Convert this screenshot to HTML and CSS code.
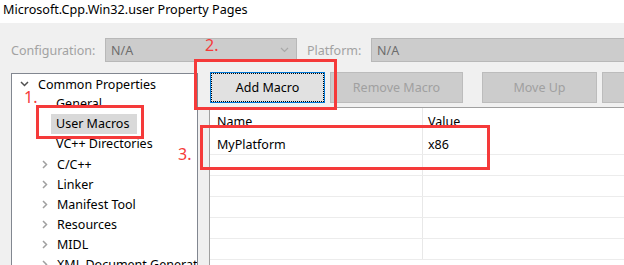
FILE: index.html
```html
<!DOCTYPE html>
<html lang="en">
  <head>
    <meta charset="UTF-8" />
    <title>Microsoft.Cpp.Win32.user Property Pages</title>
    <link rel="stylesheet" href="styles.css">
  </head>
  <body>
    <div class="titlebar">Microsoft.Cpp.Win32.user Property Pages</div>

    <div class="dialog">
      <div class="config-row">
        <span class="label">Configuration:</span>
        <div class="combo combo-config">
          <span>N/A</span>
          <svg class="combo-arrow" width="9" height="6" viewBox="0 0 9 6">
            <path d="M1 1 L4.5 4.5 L8 1" fill="none" stroke="#a8a8a8" stroke-width="1.2" />
          </svg>
        </div>
        <span class="label label-platform">Platform:</span>
        <div class="combo combo-platform"><span>N/A</span></div>
      </div>

      <div class="main">
        <!-- property tree -->
        <div class="tree">
          <div class="node root">
            <svg class="chev" width="9" height="6" viewBox="0 0 9 6">
              <path d="M1 1 L4.5 4.5 L8 1" fill="none" stroke="#505050" stroke-width="1.5" />
            </svg>
            <span>Common Properties</span>
          </div>
          <div class="node leaf"><span>General</span></div>
          <div class="node leaf"><span class="selected">User Macros</span></div>
          <div class="node leaf"><span>VC++ Directories</span></div>
          <div class="node branch"><svg class="chev" width="6" height="9" viewBox="0 0 6 9"><path d="M1 1 L4.5 4.5 L1 8" fill="none" stroke="#a0a0a0" stroke-width="1.5" /></svg><span>C/C++</span></div>
          <div class="node branch"><svg class="chev" width="6" height="9" viewBox="0 0 6 9"><path d="M1 1 L4.5 4.5 L1 8" fill="none" stroke="#a0a0a0" stroke-width="1.5" /></svg><span>Linker</span></div>
          <div class="node branch"><svg class="chev" width="6" height="9" viewBox="0 0 6 9"><path d="M1 1 L4.5 4.5 L1 8" fill="none" stroke="#a0a0a0" stroke-width="1.5" /></svg><span>Manifest Tool</span></div>
          <div class="node branch"><svg class="chev" width="6" height="9" viewBox="0 0 6 9"><path d="M1 1 L4.5 4.5 L1 8" fill="none" stroke="#a0a0a0" stroke-width="1.5" /></svg><span>Resources</span></div>
          <div class="node branch"><svg class="chev" width="6" height="9" viewBox="0 0 6 9"><path d="M1 1 L4.5 4.5 L1 8" fill="none" stroke="#a0a0a0" stroke-width="1.5" /></svg><span>MIDL</span></div>
          <div class="node branch"><svg class="chev" width="6" height="9" viewBox="0 0 6 9"><path d="M1 1 L4.5 4.5 L1 8" fill="none" stroke="#a0a0a0" stroke-width="1.5" /></svg><span>XML Document Generator</span></div>
        </div>

        <!-- macros pane -->
        <div class="pane">
          <div class="toolbar">
            <button class="btn btn-focus">Add Macro</button>
            <button class="btn btn-remove" disabled>Remove Macro</button>
            <button class="btn btn-up" disabled>Move Up</button>
            <button class="btn btn-down" disabled>Move Down</button>
          </div>
          <div class="grid">
            <div class="grid-row grid-head">
              <div class="cell cell-name">Name</div>
              <div class="cell cell-value">Value</div>
            </div>
            <div class="grid-row">
              <div class="cell cell-name">MyPlatform</div>
              <div class="cell cell-value">x86</div>
            </div>
            <div class="grid-row"><div class="cell cell-name"></div><div class="cell cell-value"></div></div>
            <div class="grid-row"><div class="cell cell-name"></div><div class="cell cell-value"></div></div>
            <div class="grid-row"><div class="cell cell-name"></div><div class="cell cell-value"></div></div>
            <div class="grid-row"><div class="cell cell-name"></div><div class="cell cell-value"></div></div>
            <div class="grid-row"><div class="cell cell-name"></div><div class="cell cell-value"></div></div>
          </div>
        </div>
      </div>

      <!-- red annotations drawn over the dialog -->
      <div class="mark mark-1"></div>
      <div class="mark mark-2"></div>
      <div class="mark mark-3"></div>
      <span class="step step-1">1.</span>
      <span class="step step-2">2.</span>
      <span class="step step-3">3.</span>
    </div>
  </body>
</html>
```

FILE: styles.css
```css
body {
  margin: 0;
  font-family: "Noto Sans", "Open Sans", sans-serif;
  font-size: 12.5px;
  color: #000;
  background: #f0f0f0;
  overflow: hidden;
  height: 265px;
}

.titlebar {
  background: #fff;
  height: 23px;
  line-height: 20px;
  padding-left: 3px;
  font-size: 12.6px;
}

.dialog {
  position: relative;
  background: #f0f0f0;
  height: 242px;
  overflow: hidden;
}

.config-row {
  display: flex;
  align-items: center;
  padding: 15px 0 0 11px;
  height: 24px;
}

.label {
  color: #a2a2a2;
  width: 94px;
  flex-shrink: 0;
}

.label-platform {
  width: 64px;
}

.combo {
  box-sizing: border-box;
  height: 24px;
  background: #cccccc;
  border: 1px solid #b8b8b8;
  color: #6d6d6d;
  display: flex;
  align-items: center;
  padding-left: 5px;
}

.combo-config {
  width: 192px;
  flex-shrink: 0;
  margin-right: 10px;
  justify-content: space-between;
}

.combo-arrow {
  margin-right: 7px;
}

.combo-platform {
  flex: 1;
  border-right: none;
}

.main {
  display: flex;
  margin-top: 10px;
}

.tree {
  box-sizing: border-box;
  flex-shrink: 0;
  margin: 1px 0 0 11px;
  width: 187px;
  height: 200px;
  background: #fff;
  border: 1px solid #828790;
  border-bottom: none;
  overflow: hidden;
  white-space: nowrap;
}

.node {
  height: 20px;
  display: flex;
  align-items: center;
}

.chev {
  flex-shrink: 0;
}

.root {
  padding-left: 8px;
}

.root .chev {
  margin-right: 9px;
}

.leaf {
  padding-left: 39px;
}

.branch {
  padding-left: 30px;
}

.branch .chev {
  margin-right: 9px;
}

.leaf span {
  padding: 0 5px;
  line-height: 20px;
}

.leaf .selected {
  background: #d9d9d9;
  padding-right: 8px;
}

.pane {
  flex: 1;
  min-width: 0;
  overflow: hidden;
  padding-left: 11px;
}

.toolbar {
  display: flex;
  height: 31px;
  padding-left: 1px;
  margin-bottom: 4px;
  white-space: nowrap;
}

.btn {
  font-family: inherit;
  font-size: 12.5px;
  height: 31px;
  box-sizing: border-box;
  border: 1px solid #bcbcbc;
  background: #cccccc;
  color: #a0a0a0;
  padding: 0;
  flex-shrink: 0;
}

.btn-focus {
  width: 115px;
  background: #e1e1e1;
  color: #000;
  border-color: #0078d7;
  outline: 1px dotted #000;
  outline-offset: -2px;
}

.btn-remove {
  width: 133px;
  margin-left: 5px;
}

.btn-up {
  width: 115px;
  margin-left: 19px;
}

.btn-down {
  width: 115px;
  margin-left: 5px;
}

.grid {
  background: #fff;
  border-top: 1px solid #a0a0a0;
  border-left: 1px solid #a0a0a0;
  height: 200px;
}

.grid-row {
  display: flex;
  height: 20px;
  border-bottom: 1px solid #ececec;
}

.grid-head {
  height: 26px;
  border-bottom: none;
}

.cell {
  display: flex;
  align-items: center;
  padding-left: 7px;
}

.cell-name {
  width: 205px;
  flex-shrink: 0;
  border-right: 1px solid #e8e8e8;
}

.cell-value {
  flex: 1;
  padding-left: 5px;
}

/* annotations */
.mark {
  position: absolute;
  box-sizing: border-box;
  border: 3px solid #f53a3a;
}

.mark-1 {
  left: 36px;
  top: 82px;
  width: 108px;
  height: 34px;
}

.mark-2 {
  left: 194px;
  top: 36px;
  width: 143px;
  height: 51px;
}

.mark-3 {
  left: 200px;
  top: 102px;
  width: 290px;
  height: 45px;
}

.step {
  position: absolute;
  color: #f53a3a;
  font-size: 16px;
  line-height: 18px;
}

.step-1 {
  left: 24px;
  top: 65px;
}

.step-2 {
  left: 205px;
  top: 13px;
}

.step-3 {
  left: 178px;
  top: 122px;
}
```
